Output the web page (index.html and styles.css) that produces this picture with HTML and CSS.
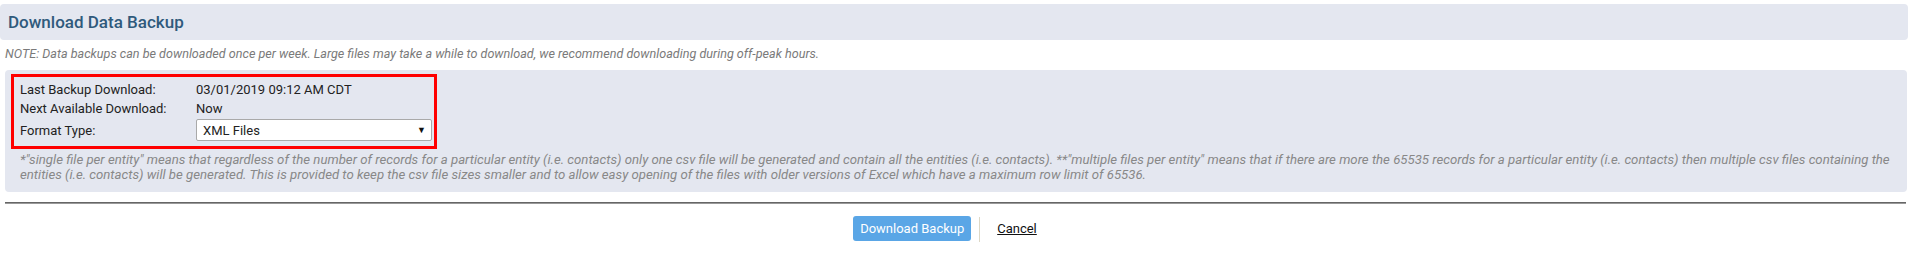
FILE: index.html
```html
<!DOCTYPE html>
<html>
<head>
<meta charset="utf-8">
<link rel="stylesheet" href="styles.css">
</head>
<body>
<div class="page">
  <div class="header"><h1 class="title">Download Data Backup</h1></div>
  <p class="note">NOTE: Data backups can be downloaded once per week. Large files may take a while to download, we recommend downloading during off-peak hours.</p>
  <div class="panel">
    <div class="highlight">
      <div class="row"><span class="label">Last Backup Download:</span><span class="value">03/01/2019 09:12 AM CDT</span></div>
      <div class="row"><span class="label">Next Available Download:</span><span class="value">Now</span></div>
      <div class="row"><span class="label">Format Type:</span>
        <div class="select"><span>XML Files</span><span class="arrow">&#9660;</span></div>
      </div>
    </div>
    <p class="footnote">*"single file per entity" means that regardless of the number of records for a particular entity (i.e. contacts) only one csv file will be generated and contain all the entities (i.e. contacts). **"multiple files per entity" means that if there are more the 65535 records for a particular entity (i.e. contacts) then multiple csv files containing the entities (i.e. contacts) will be generated. This is provided to keep the csv file sizes smaller and to allow easy opening of the files with older versions of Excel which have a maximum row limit of 65536.</p>
  </div>
  <div class="divider"></div>
  <div class="actions">
    <button class="btn">Download Backup</button>
    <span class="sep"></span>
    <a class="cancel" href="#">Cancel</a>
  </div>
</div>
</body>
</html>
```
FILE: styles.css
```css
* { box-sizing: border-box; }
html, body { margin: 0; padding: 0; background: #fff; }
body { font-family: Roboto, "Liberation Sans", sans-serif; color: #222; }
.page { width: 1910px; }
.header {
  margin: 4px 2px 0 0;
  height: 36px;
  background: #e4e7f0;
  border-radius: 4px;
  display: flex;
  align-items: center;
  padding-left: 8px;
}
.title { margin: 0; font-size: 17px; font-weight: 500; color: #2f5a7c; }
.note {
  margin: 0;
  padding: 6px 5px 0 5px;
  height: 30px;
  font-size: 12.6px;
  line-height: 16px;
  font-style: italic;
  color: #7a7a7a;
}
.panel {
  margin: 0 3px 0 5px;
  background: #e4e7f0;
  border-radius: 4px;
  padding: 4px 15px 10px 6px;
}
.highlight {
  width: 426px;
  border: 3px solid #ff0000;
  padding: 3px 2px 5px 6px;
}
.row { display: flex; align-items: center; min-height: 19px; font-size: 13px; line-height: 19px; }
.row + .row + .row { margin-top: 1px; }
.label { width: 176px; flex: none; }
.value { color: #222; }
.select {
  width: 237px;
  height: 22px;
  background: #fff;
  border: 1px solid #a9a9a9;
  border-radius: 2px;
  display: flex;
  align-items: center;
  justify-content: space-between;
  padding: 0 5px 0 6px;
  font-size: 13px;
  color: #222;
}
.arrow { font-size: 9px; color: #111; }
.footnote {
  margin: 3px 0 0 9px;
  font-size: 13.2px;
  line-height: 15px;
  font-style: italic;
  color: #888;
}
.divider { margin: 10px 4px 0 5px; border-top: 1px solid #666; height: 2px; border-bottom: 1px solid #999; }
.actions {
  display: flex;
  align-items: center;
  justify-content: center;
  padding: 11px 20px 0 0;
}
.btn {
  font-family: Roboto, "Liberation Sans", sans-serif;
  font-size: 13px;
  color: #fff;
  background: #5aa6e6;
  border: none;
  border-radius: 3px;
  width: 118px;
  height: 25px;
  padding: 0;
}
.sep { width: 1px; height: 25px; background: #ddd8c6; margin: 2px 17px 0 8px; }
.cancel { font-size: 13px; color: #111; text-decoration: underline; }
```
